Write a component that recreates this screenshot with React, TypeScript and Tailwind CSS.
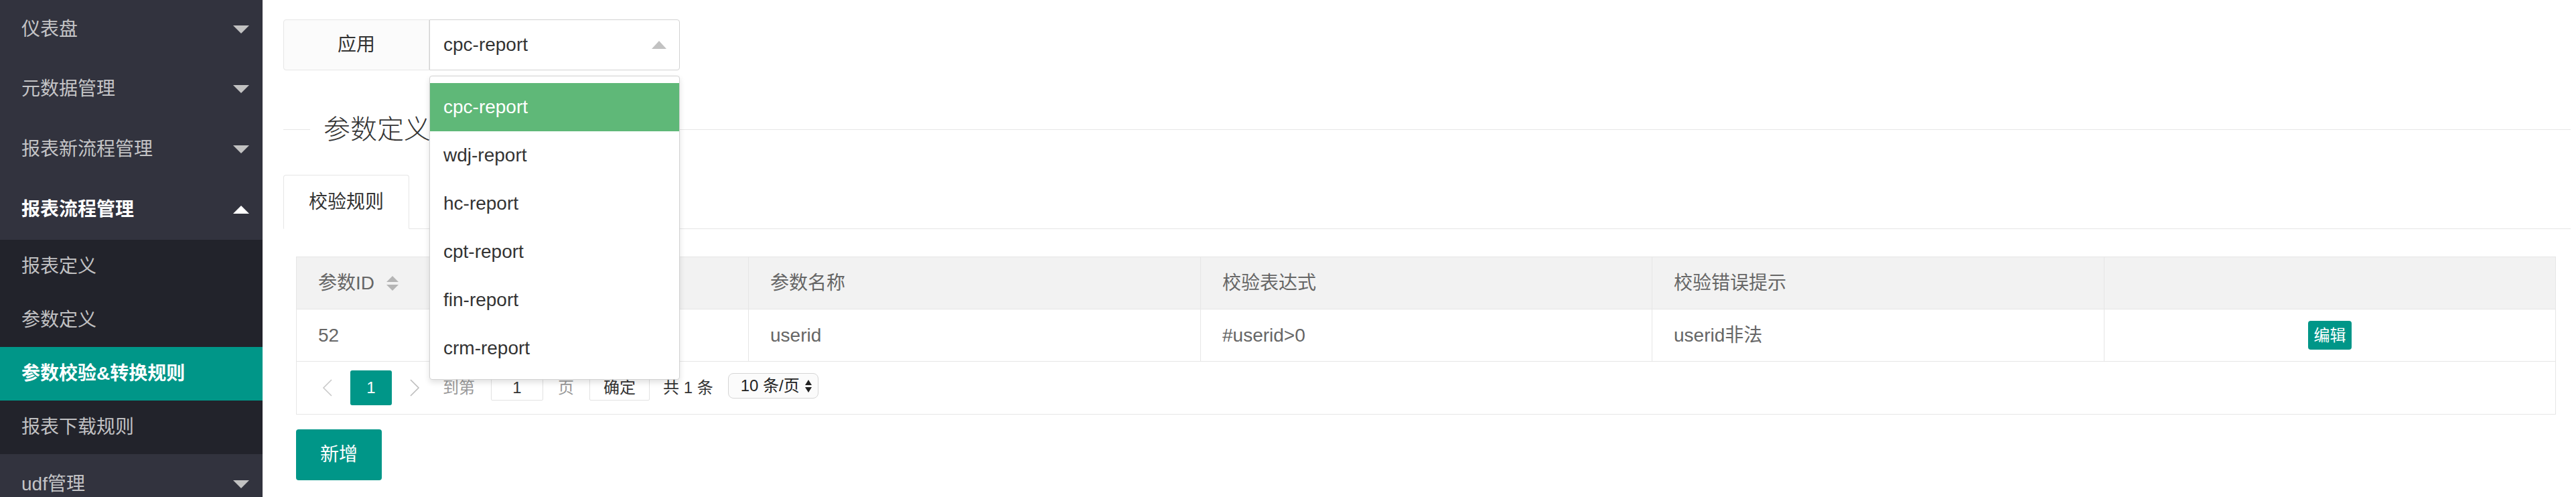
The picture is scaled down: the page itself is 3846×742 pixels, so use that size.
import React from "react";

const topItems = [
  { label: "仪表盘", h: "h-[88px]" },
  { label: "元数据管理", h: "h-[90px]" },
  { label: "报表新流程管理", h: "h-[90px]" },
];

const subItems = ["报表定义", "参数定义", "参数校验&转换规则", "报表下载规则"];

const options = ["cpc-report", "wdj-report", "hc-report", "cpt-report", "fin-report", "crm-report"];

function Down({ white }: { white?: boolean }) {
  return (
    <span
      className={`block w-0 h-0 border-l-[12px] border-r-[12px] border-t-[12px] border-l-transparent border-r-transparent ${
        white ? "border-t-white" : "border-t-[#c2c2c2]"
      }`}
    />
  );
}

function Up({ white }: { white?: boolean }) {
  return (
    <span
      className={`block w-0 h-0 border-l-[12px] border-r-[12px] border-b-[12px] border-l-transparent border-r-transparent ${
        white ? "border-b-white" : "border-b-[#c2c2c2]"
      }`}
    />
  );
}

function Sidebar() {
  return (
    <div className="w-[392px] shrink-0 h-full overflow-hidden bg-[#32333e] flex flex-col text-[28px]">
      {topItems.map((it) => (
        <div
          key={it.label}
          className={`${it.h} shrink-0 flex items-center justify-between pl-[32px] pr-[20px] text-[#c4c4c6]`}
        >
          <span>{it.label}</span>
          <Down />
        </div>
      ))}
      <div className="h-[90px] shrink-0 flex items-center justify-between pl-[32px] pr-[20px] text-white font-semibold">
        <span>报表流程管理</span>
        <Up white />
      </div>
      <div className="bg-[#22232b] shrink-0 flex flex-col">
        {subItems.map((s, i) => (
          <div
            key={s}
            className={`h-[80px] shrink-0 flex items-center pl-[32px] ${
              i === 2 ? "bg-[#009688] text-white font-semibold" : "text-[#c0c0c2]"
            }`}
          >
            {s}
          </div>
        ))}
      </div>
      <div className="h-[90px] shrink-0 flex items-center justify-between pl-[32px] pr-[20px] text-[#c4c4c6]">
        <span>udf管理</span>
        <Down />
      </div>
    </div>
  );
}

function SortIcon() {
  return (
    <span className="inline-flex flex-col gap-[4px] ml-[18px]">
      <span className="block w-0 h-0 border-l-[9px] border-r-[9px] border-b-[9px] border-l-transparent border-r-transparent border-b-[#b5b5b5]" />
      <span className="block w-0 h-0 border-l-[9px] border-r-[9px] border-t-[9px] border-l-transparent border-r-transparent border-t-[#b5b5b5]" />
    </span>
  );
}

function Chevron({ dir }: { dir: "l" | "r" }) {
  return (
    <svg width="16" height="26" viewBox="0 0 16 26" fill="none">
      {dir === "l" ? (
        <polyline points="14,1 2,13 14,25" stroke="#c9c9c9" strokeWidth="1.6" />
      ) : (
        <polyline points="2,1 14,13 2,25" stroke="#bdbdbd" strokeWidth="1.6" />
      )}
    </svg>
  );
}

function Table() {
  const cols = "grid grid-cols-[674px_675px_674px_675px_1fr]";
  return (
    <div className="mt-[41px] ml-[19px] mr-[22px] border border-[#e6e6e6] text-[28px] text-[#666]">
      <div className={`${cols} h-[78px] bg-[#f2f2f2] border-b border-[#e6e6e6]`}>
        <div className="flex items-center pl-[32px]">
          <span>参数ID</span>
          <SortIcon />
        </div>
        <div className="flex items-center pl-[32px] border-l border-[#e6e6e6]">参数名称</div>
        <div className="flex items-center pl-[32px] border-l border-[#e6e6e6]">校验表达式</div>
        <div className="flex items-center pl-[32px] border-l border-[#e6e6e6]">校验错误提示</div>
        <div className="flex items-center pl-[32px] border-l border-[#e6e6e6]"></div>
      </div>
      <div className={`${cols} h-[78px] bg-white border-b border-[#e6e6e6]`}>
        <div className="flex items-center pl-[32px]">52</div>
        <div className="flex items-center pl-[32px] border-l border-[#e6e6e6]">userid</div>
        <div className="flex items-center pl-[32px] border-l border-[#e6e6e6]">#userid&gt;0</div>
        <div className="flex items-center pl-[32px] border-l border-[#e6e6e6]">userid非法</div>
        <div className="flex items-center justify-center border-l border-[#e6e6e6]">
          <span className="w-[65px] h-[43px] rounded-[4px] bg-[#009688] text-white text-[24px] flex items-center justify-center">
            编辑
          </span>
        </div>
      </div>
      <div className="h-[78px] flex items-center pl-[14px] text-[24px]">
        <span className="w-[64px] h-[52px] flex items-center justify-center">
          <Chevron dir="l" />
        </span>
        <span className="ml-[2px] w-[62px] h-[52px] rounded-[3px] bg-[#009688] text-white flex items-center justify-center">
          1
        </span>
        <span className="ml-[2px] w-[64px] h-[52px] flex items-center justify-center">
          <Chevron dir="r" />
        </span>
        <span className="ml-[10px] text-[#999]">到第</span>
        <span className="ml-[24px] w-[78px] h-[38px] border border-[#e2e2e2] rounded-[2px] flex items-center justify-center text-[#333]">
          1
        </span>
        <span className="ml-[22px] text-[#999]">页</span>
        <span className="ml-[23px] w-[90px] h-[38px] border border-[#e2e2e2] rounded-[2px] flex items-center justify-center text-[#333]">
          确定
        </span>
        <span className="ml-[20px] text-[#333]">共 1 条</span>
        <span className="ml-[22px] -mt-[6px] w-[135px] h-[38px] border border-[#d6d6d6] rounded-[8px] bg-[#fbfbfb] flex items-center pl-[18px] text-[#222]">
          <span>10 条/页</span>
          <span className="ml-[8px] flex flex-col gap-[3px]">
            <span className="block w-0 h-0 border-l-[5px] border-r-[5px] border-b-[8px] border-l-transparent border-r-transparent border-b-[#222]" />
            <span className="block w-0 h-0 border-l-[5px] border-r-[5px] border-t-[8px] border-l-transparent border-r-transparent border-t-[#222]" />
          </span>
        </span>
      </div>
    </div>
  );
}

export default function App() {
  return (
    <div className="w-[3846px] h-[742px] overflow-hidden flex bg-white font-['Liberation_Sans','Noto_Sans_CJK_SC',sans-serif]">
      <Sidebar />
      <div className="flex-1 min-w-0 pl-[31px] pr-[8px] flex flex-col">
        {/* form row */}
        <div className="mt-[29px] shrink-0 flex h-[76px] text-[28px] text-[#333] relative z-20">
          <div className="w-[218px] h-full bg-[#fbfbfb] border border-[#e6e6e6] rounded-l-[4px] flex items-center justify-center">
            应用
          </div>
          <div className="relative w-[374px] h-full">
            <div className="w-full h-full border border-[#d2d2d2] rounded-r-[4px] bg-white flex items-center justify-between pl-[20px] pr-[19px]">
              <span>cpc-report</span>
              <span className="block w-0 h-0 border-l-[11px] border-r-[11px] border-b-[12px] border-l-transparent border-r-transparent border-b-[#c2c2c2]" />
            </div>
            <div className="absolute left-0 top-[84px] w-full bg-white border border-[#d2d2d2] rounded-[4px] shadow-[0_4px_8px_rgba(0,0,0,0.12)] py-[10px]">
              {options.map((o, i) => (
                <div
                  key={o}
                  className={`h-[72px] flex items-center pl-[20px] ${i === 0 ? "bg-[#5FB878] text-white" : "text-[#333]"}`}
                >
                  {o}
                </div>
              ))}
            </div>
          </div>
        </div>

        {/* fieldset title */}
        <div className="mt-[60px] shrink-0 h-[56px] flex items-center">
          <div className="w-[40px] h-px bg-[#e6e6e6]" />
          <span className="px-[20px] text-[40px] font-light text-[#333] leading-[56px]">参数定义</span>
          <div className="flex-1 h-px bg-[#e6e6e6]" />
        </div>

        {/* tabs */}
        <div className="mt-[40px] shrink-0 h-[81px] flex border-b border-[#e6e6e6]">
          <div className="w-[188px] h-[81px] border border-[#e6e6e6] border-b-white rounded-t-[4px] bg-white flex items-center justify-center text-[28px] text-[#333]">
            校验规则
          </div>
        </div>

        <Table />

        <div className="mt-[22px] shrink-0 ml-[19px] w-[128px] h-[76px] rounded-[4px] bg-[#009688] text-white text-[28px] flex items-center justify-center">
          新增
        </div>
      </div>
    </div>
  );
}
